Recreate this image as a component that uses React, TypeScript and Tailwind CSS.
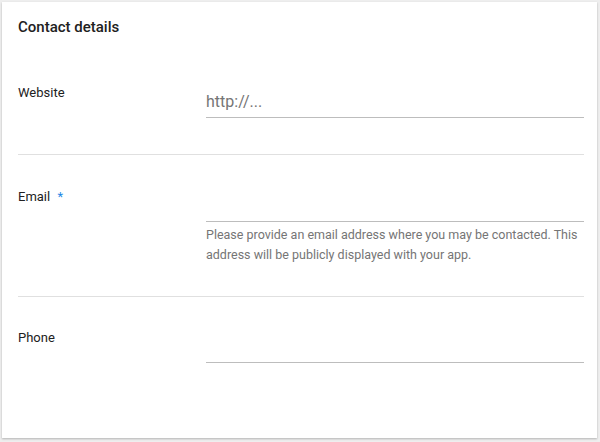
export default function App() {
  return (
    <div className="w-[600px] h-[442px] bg-[#eeeeee] pt-[2px] pl-[2px] font-['Roboto',sans-serif]">
      <div className="w-[595px] h-[436px] bg-white shadow-[0_1px_2px_rgba(0,0,0,0.25)] pl-4 pr-[13px]">
        {/* Header */}
        <div className="pt-[14px] h-[49px]">
          <h2 className="text-[15px] leading-[22px] font-medium text-[#212121]">Contact details</h2>
        </div>

        {/* Website */}
        <div className="flex pt-8 pb-9 border-b border-[#e0e0e0]">
          <div className="w-[188px] text-[13px] leading-5 text-[#212121]">Website</div>
          <div className="flex-1">
            <input
              className="w-full h-[35px] border-b border-[#bdbdbd] text-base text-[#212121] placeholder:text-[#757575] outline-none pt-[2px]"
              placeholder="http://..."
            />
          </div>
        </div>

        {/* Email */}
        <div className="flex pt-8 pb-[31px] border-b border-[#e0e0e0]">
          <div className="w-[188px] text-[13px] leading-5 text-[#212121]">
            Email <span className="ml-[4px] text-[#1e88e5]">*</span>
          </div>
          <div className="flex-1">
            <input className="w-full h-[35px] border-b border-[#bdbdbd] text-base outline-none" />
            <p className="mt-[3px] text-[12.5px] leading-5 text-[#757575]">
              Please provide an email address where you may be contacted. This address will be publicly displayed with
              your app.
            </p>
          </div>
        </div>

        {/* Phone */}
        <div className="flex pt-[31px]">
          <div className="w-[188px] text-[13px] leading-5 text-[#212121]">Phone</div>
          <div className="flex-1">
            <input className="w-full h-[35px] border-b border-[#bdbdbd] text-base outline-none" />
          </div>
        </div>
      </div>
    </div>
  );
}
